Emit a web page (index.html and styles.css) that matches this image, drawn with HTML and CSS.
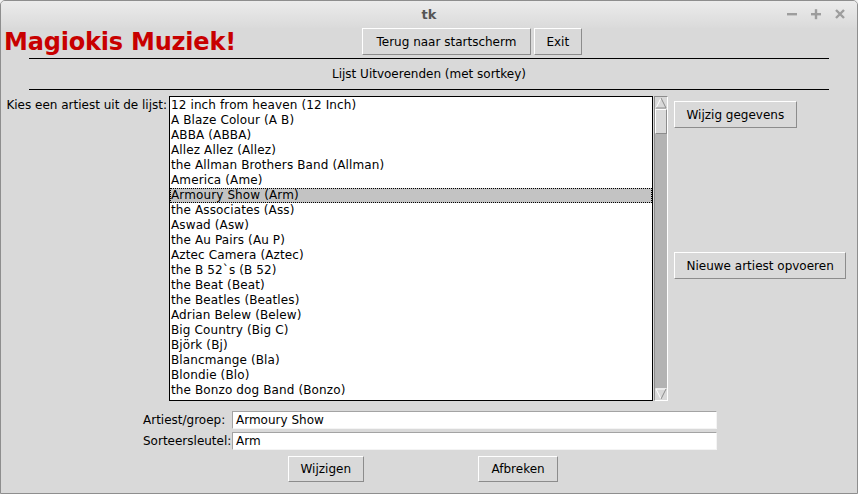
FILE: index.html
```html
<!DOCTYPE html>
<html lang="nl">
<head>
<meta charset="utf-8">
<title>tk</title>
<link rel="stylesheet" href="styles.css">
</head>
<body>
<div class="window">
  <div class="titlebar">
    <span class="title">tk</span>
    <div class="wm">
      <svg width="12" height="12" viewBox="0 0 12 12"><rect x="1" y="5" width="10" height="2.4" fill="#9d9d9d"/></svg>
      <svg width="12" height="12" viewBox="0 0 12 12"><rect x="1" y="5" width="10" height="2.4" fill="#9d9d9d"/><rect x="4.8" y="1.2" width="2.4" height="10" fill="#9d9d9d"/></svg>
      <svg width="12" height="12" viewBox="0 0 12 12"><path d="M2 2 L10 10 M10 2 L2 10" stroke="#9d9d9d" stroke-width="2.4"/></svg>
    </div>
  </div>
  <div class="content">
    <div class="toprow">
      <h1 class="brand">Magiokis Muziek!</h1>
      <div class="topbtns">
        <button class="btn btn-wide">Terug naar startscherm</button>
        <button class="btn btn-gap">Exit</button>
      </div>
    </div>
    <div class="sep"></div>
    <div class="subtitle">Lijst Uitvoerenden (met sortkey)</div>
    <div class="sep sep2"></div>
    <div class="main">
      <div class="listlabel">Kies een artiest uit de lijst:</div>
      <div class="listbox">
        <ul class="items">
          <li>12 inch from heaven (12 Inch)</li>
          <li>A Blaze Colour (A B)</li>
          <li>ABBA (ABBA)</li>
          <li>Allez Allez (Allez)</li>
          <li>the Allman Brothers Band (Allman)</li>
          <li>America (Ame)</li>
          <li class="selected">Armoury Show (Arm)</li>
          <li>the Associates (Ass)</li>
          <li>Aswad (Asw)</li>
          <li>the Au Pairs (Au P)</li>
          <li>Aztec Camera (Aztec)</li>
          <li>the B 52`s (B 52)</li>
          <li>the Beat (Beat)</li>
          <li>the Beatles (Beatles)</li>
          <li>Adrian Belew (Belew)</li>
          <li>Big Country (Big C)</li>
          <li>Björk (Bj)</li>
          <li>Blancmange (Bla)</li>
          <li>Blondie (Blo)</li>
          <li>the Bonzo dog Band (Bonzo)</li>
        </ul>
      </div>
      <div class="scrollbar">
        <div class="arrow">
          <svg width="12" height="12" viewBox="0 0 12 12">
            <polygon points="6,1 11,11 1,11" fill="#d9d9d9"/>
            <path d="M1 11 L6 1" stroke="#ffffff" stroke-width="1"/>
            <path d="M6 1 L11 11 L1 11" stroke="#8c8c8c" stroke-width="1" fill="none"/>
          </svg>
        </div>
        <div class="slider"></div>
        <div class="trough"></div>
        <div class="arrow">
          <svg width="12" height="12" viewBox="0 0 12 12">
            <polygon points="1,1 11,1 6,11" fill="#d9d9d9"/>
            <path d="M1 1 L11 1 M1 1 L6 11" stroke="#ffffff" stroke-width="1"/>
            <path d="M11 1 L6 11" stroke="#8c8c8c" stroke-width="1"/>
          </svg>
        </div>
      </div>
      <div class="sidebtns">
        <button class="btn">Wijzig gegevens</button>
        <button class="btn btn-new">Nieuwe artiest opvoeren</button>
      </div>
    </div>
    <div class="form">
      <label class="flabel">Artiest/groep:</label>
      <div class="entry">Armoury Show</div>
      <label class="flabel">Sorteersleutel:</label>
      <div class="entry">Arm</div>
    </div>
    <div class="actions">
      <div class="cell"><button class="btn btn-small">Wijzigen</button></div>
      <div class="cell"><button class="btn btn-small btn-abort">Afbreken</button></div>
    </div>
  </div>
</div>
</body>
</html>
```

FILE: styles.css
```css
html, body {
  margin: 0;
  padding: 0;
  background: #f2f2f2;
}

body {
  font-family: "DejaVu Sans", "Noto Sans", sans-serif;
  font-size: 12px;
  color: #000;
}

.window {
  width: 858px;
  height: 494px;
  box-sizing: border-box;
  border: 1px solid #8e8e8e;
  border-radius: 5px 5px 0 0;
  background: #d9d9d9;
  overflow: hidden;
  display: flex;
  flex-direction: column;
}

.titlebar {
  height: 27px;
  flex: none;
  background: linear-gradient(#ececec, #dadada);
  display: flex;
  align-items: center;
  justify-content: center;
  position: relative;
}

.title {
  font-weight: bold;
  font-size: 13px;
  color: #555;
  margin-top: -1px;
}

.wm {
  position: absolute;
  right: 11px;
  top: 7px;
  display: flex;
  gap: 12px;
}

.content {
  flex: 1;
}

.toprow {
  display: grid;
  grid-template-columns: 361px auto;
  height: 28px;
}

.brand {
  margin: 0;
  padding-left: 3px;
  font-family: "DejaVu Sans", sans-serif;
  font-weight: bold;
  font-size: 24px;
  line-height: 28px;
  letter-spacing: -0.2px;
  color: #c80000;
  white-space: nowrap;
}

.topbtns {
  display: flex;
  align-items: flex-start;
}

.btn {
  font-family: "DejaVu Sans", sans-serif;
  font-size: 12px;
  color: #000;
  background: #d9d9d9;
  border: 1px solid;
  border-color: #ffffff #8c8c8c #8c8c8c #ffffff;
  box-sizing: border-box;
  height: 27px;
  padding: 0 11.5px;
  margin: 0;
  border-radius: 0;
  white-space: nowrap;
}

.btn-wide {
  padding: 0 13.5px;
}

.btn-abort {
  padding: 0 12.5px;
}

.btn-gap {
  margin-left: 3px;
}

.sep {
  margin: 2px 0 0 28px;
  width: 800px;
  height: 1px;
  background: #000;
}

.sep2 {
  margin-top: 0;
}

.subtitle {
  width: 800px;
  margin-left: 28px;
  text-align: center;
  line-height: 30px;
  height: 30px;
}

.main {
  display: flex;
  align-items: flex-start;
  margin-top: 6px;
}

.listlabel {
  width: 168px;
  box-sizing: border-box;
  text-align: right;
  padding-right: 2px;
  padding-top: 2px;
  line-height: 15px;
  white-space: nowrap;
}

.listbox {
  width: 484px;
  height: 305px;
  box-sizing: border-box;
  border: 1px solid #000;
  background: #fff;
  padding-top: 1px;
  overflow: hidden;
}

.items {
  list-style: none;
  margin: 0;
  padding: 0;
}

.items li {
  height: 15px;
  box-sizing: border-box;
  line-height: 13px;
  letter-spacing: 0.12px;
  border: 1px solid transparent;
  white-space: nowrap;
}

.items li.selected {
  background: #c3c3c3;
  border: 1px dotted #000;
}

.scrollbar {
  width: 14px;
  height: 305px;
  box-sizing: border-box;
  margin-left: 1px;
  border: 1px solid;
  border-color: #8c8c8c #ffffff #ffffff #8c8c8c;
  background: #b3b3b3;
  display: flex;
  flex-direction: column;
}

.arrow {
  height: 12px;
  background: #d9d9d9;
  flex: none;
}

.arrow svg {
  display: block;
}

.slider {
  height: 25px;
  flex: none;
  box-sizing: border-box;
  background: #d9d9d9;
  border: 1px solid;
  border-color: #ffffff #8c8c8c #8c8c8c #ffffff;
}

.trough {
  flex: 1;
}

.sidebtns {
  display: flex;
  flex-direction: column;
  align-items: flex-start;
  margin-left: 6px;
  padding-top: 5px;
}

.btn-new {
  margin-top: 124px;
}

.form {
  display: grid;
  grid-template-columns: 89px 485px;
  row-gap: 3px;
  margin: 10px 0 0 142px;
}

.flabel {
  line-height: 18px;
  white-space: nowrap;
}

.entry {
  height: 18px;
  box-sizing: border-box;
  background: #fff;
  border: 1px solid;
  border-color: #a3a3a3 #f4f4f4 #f4f4f4 #a3a3a3;
  line-height: 16px;
  padding-left: 3px;
}

.actions {
  display: flex;
  margin-top: 6px;
  padding-left: 287px;
}

.actions .cell {
  width: 190px;
}

.btn-small {
  height: 26px;
}
```
